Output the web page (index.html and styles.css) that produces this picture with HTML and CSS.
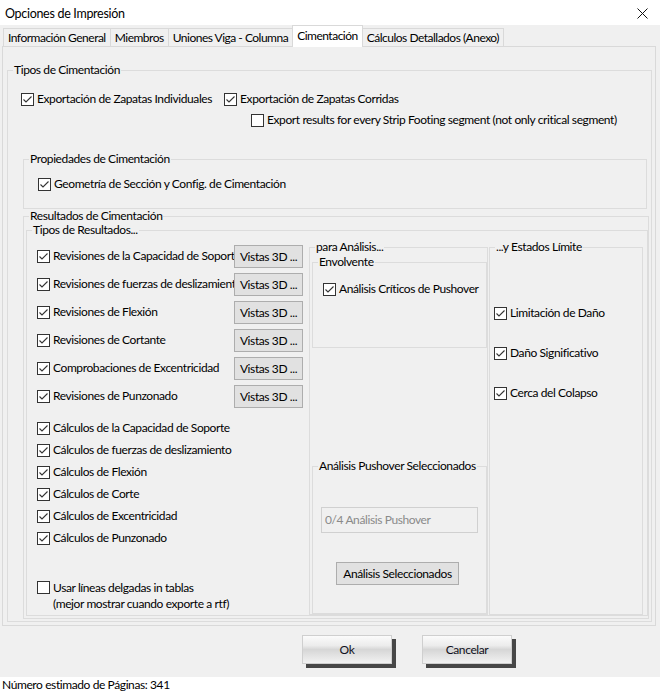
FILE: index.html
```html
<!DOCTYPE html>
<html lang="es">
<head>
<meta charset="utf-8">
<title>Opciones de Impresión</title>
<link rel="stylesheet" href="styles.css">
</head>
<body>
<div class="window">
  <div class="titlebar">
    <span class="title">Opciones de Impresión</span>
    <svg class="close" viewBox="0 0 11 11"><path d="M0.5 0.5L10.5 10.5M10.5 0.5L0.5 10.5"/></svg>
  </div>
  <div class="tabs">
    <div class="tab">Información General</div>
    <div class="tab">Miembros</div>
    <div class="tab">Uniones Viga - Columna</div>
    <div class="tab active">Cimentación</div>
    <div class="tab">Cálculos Detallados (Anexo)</div>
  </div>
  <div class="panel">
    <fieldset class="g g-tipos">
      <legend>Tipos de Cimentación</legend>
      <div class="row row-a">
        <label class="chk first"><span class="cb on"><svg viewBox="0 0 11 11"><polyline points="1.5,5.5 4,8 9.5,2.5"/></svg></span>Exportación de Zapatas Individuales</label>
        <label class="chk"><span class="cb on"><svg viewBox="0 0 11 11"><polyline points="1.5,5.5 4,8 9.5,2.5"/></svg></span>Exportación de Zapatas Corridas</label>
      </div>
      <div class="row row-b">
        <label class="chk"><span class="cb"></span>Export results for every Strip Footing segment (not only critical segment)</label>
      </div>
      <fieldset class="g g-props">
        <legend>Propiedades de Cimentación</legend>
        <div class="row row-p">
          <label class="chk"><span class="cb on"><svg viewBox="0 0 11 11"><polyline points="1.5,5.5 4,8 9.5,2.5"/></svg></span>Geometría de Sección y Config. de Cimentación</label>
        </div>
      </fieldset>
      <fieldset class="g g-res">
        <legend>Resultados de Cimentación</legend>
        <fieldset class="g g-tres">
          <legend>Tipos de Resultados...</legend>
          <div class="cols">
            <div class="col-left">
              <div class="vrow"><span class="cb on"><svg viewBox="0 0 11 11"><polyline points="1.5,5.5 4,8 9.5,2.5"/></svg></span><span class="vl">Revisiones de la Capacidad de Soporte</span><button class="wbtn v3d">Vistas 3D ...</button></div>
              <div class="vrow"><span class="cb on"><svg viewBox="0 0 11 11"><polyline points="1.5,5.5 4,8 9.5,2.5"/></svg></span><span class="vl">Revisiones de fuerzas de deslizamiento</span><button class="wbtn v3d">Vistas 3D ...</button></div>
              <div class="vrow"><span class="cb on"><svg viewBox="0 0 11 11"><polyline points="1.5,5.5 4,8 9.5,2.5"/></svg></span><span class="vl">Revisiones de Flexión</span><button class="wbtn v3d">Vistas 3D ...</button></div>
              <div class="vrow"><span class="cb on"><svg viewBox="0 0 11 11"><polyline points="1.5,5.5 4,8 9.5,2.5"/></svg></span><span class="vl">Revisiones de Cortante</span><button class="wbtn v3d">Vistas 3D ...</button></div>
              <div class="vrow"><span class="cb on"><svg viewBox="0 0 11 11"><polyline points="1.5,5.5 4,8 9.5,2.5"/></svg></span><span class="vl">Comprobaciones de Excentricidad</span><button class="wbtn v3d">Vistas 3D ...</button></div>
              <div class="vrow"><span class="cb on"><svg viewBox="0 0 11 11"><polyline points="1.5,5.5 4,8 9.5,2.5"/></svg></span><span class="vl">Revisiones de Punzonado</span><button class="wbtn v3d">Vistas 3D ...</button></div>
              <div class="calcs">
                <label class="chk crow"><span class="cb on"><svg viewBox="0 0 11 11"><polyline points="1.5,5.5 4,8 9.5,2.5"/></svg></span>Cálculos de la Capacidad de Soporte</label>
                <label class="chk crow"><span class="cb on"><svg viewBox="0 0 11 11"><polyline points="1.5,5.5 4,8 9.5,2.5"/></svg></span>Cálculos de fuerzas de deslizamiento</label>
                <label class="chk crow"><span class="cb on"><svg viewBox="0 0 11 11"><polyline points="1.5,5.5 4,8 9.5,2.5"/></svg></span>Cálculos de Flexión</label>
                <label class="chk crow"><span class="cb on"><svg viewBox="0 0 11 11"><polyline points="1.5,5.5 4,8 9.5,2.5"/></svg></span>Cálculos de Corte</label>
                <label class="chk crow"><span class="cb on"><svg viewBox="0 0 11 11"><polyline points="1.5,5.5 4,8 9.5,2.5"/></svg></span>Cálculos de Excentricidad</label>
                <label class="chk crow"><span class="cb on"><svg viewBox="0 0 11 11"><polyline points="1.5,5.5 4,8 9.5,2.5"/></svg></span>Cálculos de Punzonado</label>
              </div>
              <div class="thin">
                <span class="cb"></span>
                <span class="thin-text">Usar líneas delgadas in tablas<br>(mejor mostrar cuando exporte a rtf)</span>
              </div>
            </div>
            <fieldset class="g g-ana">
              <legend>para Análisis...</legend>
              <fieldset class="g g-env">
                <legend>Envolvente</legend>
                <label class="chk env-row"><span class="cb on"><svg viewBox="0 0 11 11"><polyline points="1.5,5.5 4,8 9.5,2.5"/></svg></span>Análisis Críticos de Pushover</label>
              </fieldset>
              <fieldset class="g g-sel">
                <legend>Análisis Pushover Seleccionados</legend>
                <div class="field">0/4 Análisis Pushover</div>
                <button class="wbtn selbtn">Análisis Seleccionados</button>
              </fieldset>
            </fieldset>
            <fieldset class="g g-est">
              <legend>...y Estados Límite</legend>
              <label class="chk erow"><span class="cb on"><svg viewBox="0 0 11 11"><polyline points="1.5,5.5 4,8 9.5,2.5"/></svg></span>Limitación de Daño</label>
              <label class="chk erow"><span class="cb on"><svg viewBox="0 0 11 11"><polyline points="1.5,5.5 4,8 9.5,2.5"/></svg></span>Daño Significativo</label>
              <label class="chk erow"><span class="cb on"><svg viewBox="0 0 11 11"><polyline points="1.5,5.5 4,8 9.5,2.5"/></svg></span>Cerca del Colapso</label>
            </fieldset>
          </div>
        </fieldset>
      </fieldset>
    </fieldset>
  </div>
  <div class="footer">
    <button class="gbtn">Ok</button>
    <button class="gbtn">Cancelar</button>
  </div>
  <div class="status">Número estimado de Páginas: 341</div>
</div>
</body>
</html>
```
FILE: styles.css
```css
* { box-sizing: border-box; }
html, body { margin: 0; padding: 0; }
body {
  width: 660px;
  height: 693px;
  overflow: hidden;
  background: #f0f0f0;
  font-family: Lato, "Liberation Sans", sans-serif;
  font-size: 12px;
  letter-spacing: -0.4px;
  color: #000;
}
.window { display: flex; flex-direction: column; height: 693px; }

.titlebar {
  height: 25px;
  flex: none;
  background: #fff;
  display: flex;
  align-items: center;
  justify-content: space-between;
  padding: 1px 12px 0 5px;
}
.title { font-size: 12.5px; letter-spacing: -0.3px; }
.close { width: 11px; height: 11px; }
.close path { stroke: #111; stroke-width: 1; fill: none; }

.tabs {
  height: 21px;
  flex: none;
  display: flex;
  align-items: flex-end;
  padding-left: 3px;
}
.tab {
  height: 18px;
  line-height: 17px;
  padding: 0 4px;
  border: 1px solid #d9d9d9;
  border-bottom: none;
  margin-right: -1px;
  background: #f0f0f0;
  white-space: nowrap;
  letter-spacing: -0.5px;
}
.tab.active {
  height: 22px;
  line-height: 19px;
  margin-bottom: -1px;
  background: #fff;
  position: relative;
  z-index: 1;
}

.panel {
  height: 580px;
  flex: none;
  margin: 0 4px 0 2px;
  border: 1px solid #d9d9d9;
  padding: 16px 3px 0 4px;
  overflow: hidden;
}

.g {
  margin: 0;
  padding: 0;
  border: 1px solid #dcdcdc;
  min-width: 0;
}
.g > legend {
  margin-left: 5px;
  padding: 0 1px;
  height: 14px;
  line-height: 14px;
  white-space: nowrap;
}

.row { display: flex; height: 16px; align-items: center; }
.chk { display: flex; align-items: center; white-space: nowrap; height: 16px; line-height: 16px; }
.cb {
  width: 13px;
  height: 13px;
  flex: none;
  border: 1px solid #333;
  background: #fff;
  margin-right: 3px;
  display: inline-flex;
}
.cb svg { width: 11px; height: 11px; }
.cb polyline { fill: none; stroke: #333; stroke-width: 1.1; }

.g-tipos { padding: 0 0 2px 0; margin-bottom: 2px; }
.row-a { margin-top: 14px; padding-left: 13px; }
.row-a .first { margin-right: 12px; }
.row-b { margin-top: 5px; padding-left: 243px; }

.g-props { margin: 24px 4px 0 15px; padding: 10px 0 16px 0; }
.row-p { padding-left: 14px; }

.g-res { margin: 0 2px 0 15px; padding: 0 0 2px 0; }
.g-tres { margin-left: 2px; margin-right: 0; }

.cols { display: flex; padding-top: 3px; }
.col-left { width: 282px; flex: none; padding: 2px 6px 3px 10px; }
.vrow { display: flex; align-items: center; height: 28px; }
.vl { flex: 1; min-width: 0; overflow: hidden; white-space: nowrap; line-height: 16px; }
.wbtn {
  font: inherit;
  letter-spacing: inherit;
  color: #000;
  background: #e1e1e1;
  border: 1px solid #adadad;
  padding: 0;
  white-space: nowrap;
}
.v3d { width: 69px; height: 23px; flex: none; }

.calcs { margin-top: 7px; }
.crow { height: 22px; }

.thin { display: flex; align-items: flex-start; margin-top: 31px; line-height: 16px; }
.thin .cb { margin-top: 1px; }

.g-ana { width: 179px; flex: none; }
.g-env { margin: 1px 0 0 2px; padding: 12px 0 50px 0; }
.env-row { margin-left: 10px; }
.g-sel { margin: 111px 0 0 2px; padding: 0 0 28px 0; }
.field {
  margin: 34px 0 0 8px;
  width: 157px;
  height: 26px;
  border: 1px solid #d0d0d0;
  background: #f0f0f0;
  color: #8a8a8a;
  line-height: 24px;
  padding-left: 3px;
}
.selbtn { display: block; margin: 29px 0 0 23px; width: 123px; height: 23px; }

.g-est { width: 154px; flex: none; margin-left: 1px; padding: 0; }
.erow { margin: 24px 0 0 4px; }
.erow:first-of-type { margin-top: 51px; }

.footer {
  height: 51px;
  flex: none;
  display: flex;
  align-items: flex-start;
  gap: 30px;
  padding: 9px 0 0 302px;
}
.gbtn {
  width: 90px;
  height: 29px;
  font: inherit;
  letter-spacing: inherit;
  color: #101020;
  border: 1px solid #cfcfcf;
  background: linear-gradient(#fbfbfb 0%, #ececec 35%, #d6d6d6 50%, #e4e4e4 75%, #f2f2f2 100%);
  box-shadow: 4px 4px 0 #474747;
  padding: 0;
}

.status {
  height: 16px;
  flex: none;
  background: #fff;
  padding-left: 2px;
  line-height: 16px;
}
```
